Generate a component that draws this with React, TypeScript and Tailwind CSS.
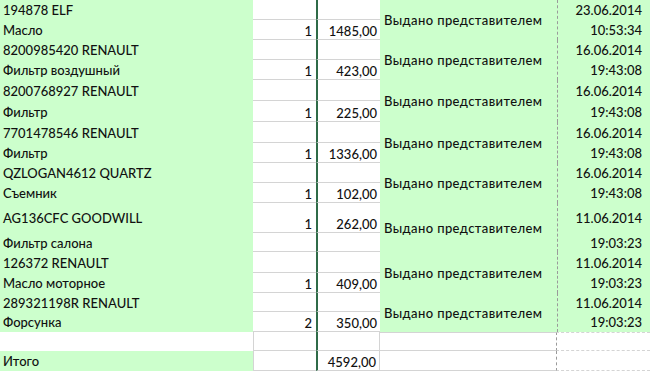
import React from "react";

type Item = {
  code: string;
  name: string;
  qty: string;
  price: string;
  date: string;
  time: string;
  h1: string;
  h2: string;
  top?: boolean;
};

const items: Item[] = [
  { code: "194878 ELF", name: "Масло", qty: "1", price: "1485,00", date: "23.06.2014", time: "10:53:34", h1: "h-[20px]", h2: "h-[20px]" },
  { code: "8200985420 RENAULT", name: "Фильтр воздушный", qty: "1", price: "423,00", date: "16.06.2014", time: "19:43:08", h1: "h-[20px]", h2: "h-[20px]" },
  { code: "8200768927 RENAULT", name: "Фильтр", qty: "1", price: "225,00", date: "16.06.2014", time: "19:43:08", h1: "h-[21px]", h2: "h-[21px]" },
  { code: "7701478546 RENAULT", name: "Фильтр", qty: "1", price: "1336,00", date: "16.06.2014", time: "19:43:08", h1: "h-[21px]", h2: "h-[20px]" },
  { code: "QZLOGAN4612 QUARTZ", name: "Съемник", qty: "1", price: "102,00", date: "16.06.2014", time: "19:43:08", h1: "h-[20px]", h2: "h-[20px]" },
  { code: "AG136CFC GOODWILL", name: "Фильтр салона", qty: "1", price: "262,00", date: "11.06.2014", time: "19:03:23", h1: "h-[30px]", h2: "h-[19px]", top: true },
  { code: "126372 RENAULT", name: "Масло моторное", qty: "1", price: "409,00", date: "11.06.2014", time: "19:03:23", h1: "h-[21px]", h2: "h-[20px]" },
  { code: "289321198R RENAULT", name: "Форсунка", qty: "2", price: "350,00", date: "11.06.2014", time: "19:03:23", h1: "h-[19px]", h2: "h-[20px]" },
];

// one line of the left block: name / qty / price
const LeftRow = ({ h, a, b, c }: { h: string; a: string; b?: string; c?: string }) => (
  <div className={`flex ${h}`}>
    <div className="flex w-[253px] items-center bg-[#ccffcc] pl-[3px]">{a}</div>
    <div className="flex w-[63px] items-end justify-end border-b border-[#d4d4d4] bg-white pr-[4px]">{b}</div>
    <div className="flex w-[64px] items-end justify-end border-b border-l-2 border-b-[#d4d4d4] border-l-[#2f6b48] bg-white pr-[3px]">
      {c}
    </div>
  </div>
);

export default function App() {
  return (
    <div
      className="h-[371px] w-[650px] overflow-hidden bg-white text-[13px] font-medium leading-[16px] text-[#111]"
      style={{ fontFamily: "Lato, 'Noto Sans', sans-serif" }}
    >
      {items.map((it, i) => (
        <div key={i} className="flex">
          <div className="flex w-[380px] flex-col">
            <LeftRow h={it.h1} a={it.code} b={it.top ? it.qty : ""} c={it.top ? it.price : ""} />
            <LeftRow h={it.h2} a={it.name} b={it.top ? "" : it.qty} c={it.top ? "" : it.price} />
          </div>
          <div className="flex w-[177px] items-center bg-[#ccffcc] pl-[4px] tracking-[0.4px]">Выдано представителем</div>
          <div className="flex flex-1 flex-col border-l border-dashed border-[#9a9a9a] bg-[#ccffcc]">
            <div className={`flex ${it.h1} items-center justify-end pr-[8px]`}>{it.date}</div>
            <div className={`flex ${it.h2} items-center justify-end pr-[8px]`}>{it.time}</div>
          </div>
        </div>
      ))}

      {/* empty row */}
      <div className="flex h-[19px]">
        <div className="w-[253px] bg-white" />
        <div className="w-[63px] border-b border-l border-[#d4d4d4]" />
        <div className="w-[64px] border-b border-l-2 border-r border-b-[#d4d4d4] border-l-[#2f6b48] border-r-[#d4d4d4]" />
        <div className="w-[176px] border-y border-[#d4d4d4]" />
        <div className="flex-1 border-y border-l border-dashed border-y-[#d4d4d4] border-l-[#9a9a9a]" />
      </div>

      {/* total */}
      <div className="flex h-[20px]">
        <div className="flex w-[253px] items-center bg-[#ccffcc] pl-[3px]">Итого</div>
        <div className="w-[63px] border-b border-l border-[#d4d4d4]" />
        <div className="flex w-[64px] items-end justify-end border-b border-l-2 border-r border-b-[#d4d4d4] border-l-[#2f6b48] border-r-[#d4d4d4] pr-[3px]">
          4592,00
        </div>
        <div className="w-[176px] border-b border-[#d4d4d4]" />
        <div className="flex-1 border-b border-l border-dashed border-b-[#d4d4d4] border-l-[#9a9a9a]" />
      </div>
    </div>
  );
}
